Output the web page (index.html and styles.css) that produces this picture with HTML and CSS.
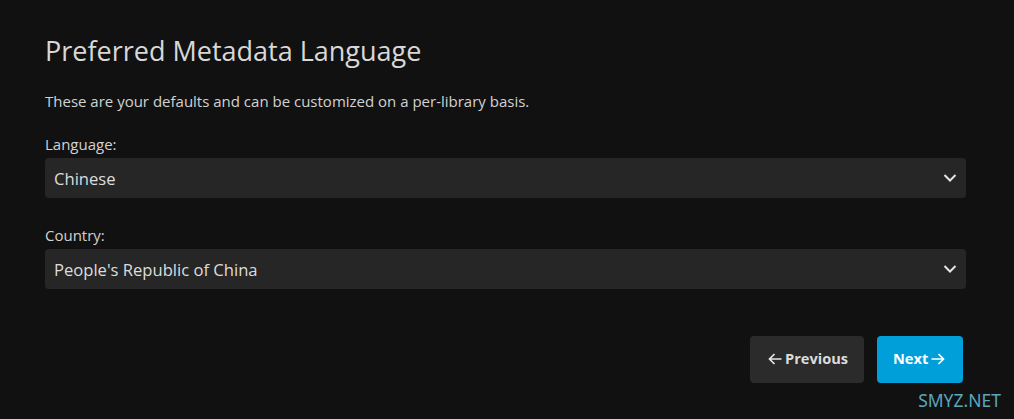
FILE: index.html
```html
<!DOCTYPE html>
<html>
<head>
<meta charset="utf-8">
<link rel="stylesheet" href="styles.css">
</head>
<body>
<div class="page">
  <h1 class="title">Preferred Metadata Language</h1>
  <p class="desc">These are your defaults and can be customized on a per-library basis.</p>
  <div class="field">
    <label class="label">Language:</label>
    <div class="select">
      <span>Chinese</span>
      <svg class="chev" width="14" height="10" viewBox="0 0 14 10"><path d="M1.5 2 L7 7.5 L12.5 2" fill="none" stroke="#e6e6e6" stroke-width="2"/></svg>
    </div>
  </div>
  <div class="field field-2">
    <label class="label">Country:</label>
    <div class="select">
      <span>People's Republic of China</span>
      <svg class="chev" width="14" height="10" viewBox="0 0 14 10"><path d="M1.5 2 L7 7.5 L12.5 2" fill="none" stroke="#e6e6e6" stroke-width="2"/></svg>
    </div>
  </div>
  <div class="actions">
    <button class="btn btn-prev"><svg width="14" height="12" viewBox="0 0 14 12"><path d="M13.5 6 H1.5 M6.5 1 L1.5 6 L6.5 11" fill="none" stroke="#e6e6e6" stroke-width="1.7"/></svg>Previous</button>
    <button class="btn btn-next">Next<svg width="14" height="12" viewBox="0 0 14 12"><path d="M0.5 6 H12.5 M7.5 1 L12.5 6 L7.5 11" fill="none" stroke="#ffffff" stroke-width="1.7"/></svg></button>
  </div>
  <div class="watermark">SMYZ.NET</div>
</div>
</body>
</html>
```
FILE: styles.css
```css
* { box-sizing: border-box; }
html, body { margin: 0; padding: 0; }
body {
  background: #111111;
  font-family: "Open Sans", "Noto Sans", sans-serif;
  color: #d9d9d9;
  width: 1014px;
  height: 419px;
  overflow: hidden;
}
.page {
  position: relative;
  padding: 31px 48px 0 45px;
  height: 419px;
}
.title {
  margin: 0;
  font-size: 27px;
  font-weight: 400;
  line-height: 40px;
  color: #d8d8d8;
}
.desc {
  margin: 20px 0 0;
  font-size: 15px;
  line-height: 20px;
  color: #d2d2d2;
}
.field { margin-top: 23px; }
.field-2 { margin-top: 27px; }
.label {
  display: block;
  font-size: 15px;
  line-height: 20px;
  color: #d2d2d2;
  margin-bottom: 4px;
}
.select {
  display: flex;
  align-items: center;
  justify-content: space-between;
  height: 40px;
  background: #262626;
  border-radius: 4px;
  padding: 0 9px 0 9px;
  font-size: 16.6px;
  color: #dddddd;
}
.chev { display: block; }
.actions {
  display: flex;
  justify-content: flex-end;
  gap: 13px;
  margin-top: 47px;
  padding-right: 3px;
}
.btn {
  display: flex;
  align-items: center;
  height: 47px;
  border: none;
  border-radius: 4px;
  font-family: "Open Sans", "Noto Sans", sans-serif;
  font-size: 14.6px;
  font-weight: 700;
  padding-bottom: 5px;
  cursor: pointer;
}
.btn svg { margin-top: 2px; }
.btn-prev {
  width: 114px;
  background: #2b2b2b;
  color: #dcdcdc;
  padding-left: 18px;
  padding-right: 0;
  gap: 3px;
}
.btn-next {
  width: 86px;
  background: #009fd9;
  color: #ffffff;
  padding-left: 16px;
  padding-right: 0;
  gap: 3px;
}
.watermark {
  position: absolute;
  right: 13px;
  bottom: 9px;
  font-family: "Noto Sans", "Open Sans", sans-serif;
  font-size: 17.5px;
  line-height: 20px;
  color: #5aa6bd;
}
```
